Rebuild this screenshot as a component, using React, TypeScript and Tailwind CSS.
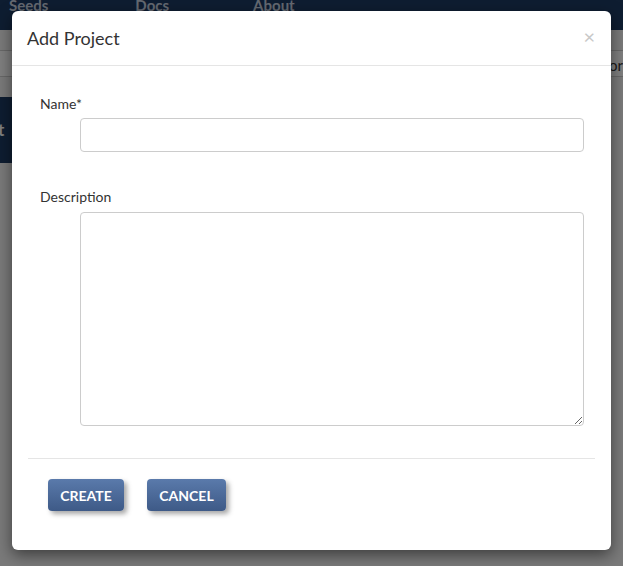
import React from "react";

const font = { fontFamily: "Lato, 'Open Sans', sans-serif" };

function Background() {
  return (
    <div className="relative h-[566px] w-[623px] overflow-hidden bg-[#f4f4f4]">
      {/* Navbar */}
      <div className="flex h-[30px] items-start bg-[#1d3a63] text-[15px] font-bold text-[#c8d2e0]">
        <span className="ml-[9px] -mt-[6px]">Seeds</span>
        <span className="ml-[87px] -mt-[6px]">Docs</span>
        <span className="ml-[84px] -mt-[6px]">About</span>
      </div>
      {/* Sub toolbar */}
      <div className="mt-[20px] h-[27px] border-y border-[#d0d0d0] bg-white pr-0 text-right text-[15px] leading-[29px] text-[#333]">
        or
      </div>
      <div className="mt-[20px] flex h-[66px] w-[12px] items-center bg-[#1d3a63] text-[17px] font-bold text-white">
        <span className="-ml-[2px]">t</span>
      </div>
    </div>
  );
}

export default function App() {
  return (
    <div style={font} className="relative h-[566px] w-[623px] overflow-hidden">
      <Background />
      {/* Backdrop */}
      <div className="absolute inset-0 bg-black/50" />
      {/* Modal */}
      <div className="absolute left-[12px] top-[11px] flex h-[539px] w-[599px] flex-col rounded-[6px] bg-white shadow-[0_5px_15px_rgba(0,0,0,0.5)]">
        <div className="flex h-[55px] items-center justify-between border-b border-[#e5e5e5] pl-[15px] pr-[16px]">
          <h4 className="pt-[1px] text-[18px] text-[#333]">Add Project</h4>
          <span className="-mt-[5px] text-[20px] leading-none text-[#c8c8c8]">×</span>
        </div>
        <div className="flex flex-col px-[28px] pt-[28px]">
          <label className="text-[14px] leading-[20px] text-[#333]">Name*</label>
          <input
            className="ml-[40px] mt-[4px] h-[34px] w-[504px] rounded-[4px] border border-[#cccccc] px-3 text-[14px] outline-none"
            type="text"
          />
          <label className="mt-[35px] text-[14px] leading-[20px] text-[#333]">Description</label>
          <textarea className="ml-[40px] mt-[5px] h-[214px] w-[504px] rounded-[4px] border border-[#cccccc] px-3 py-2 text-[14px] outline-none" />
        </div>
        <div className="mx-[16px] mt-[32px] border-t border-[#e5e5e5]" />
        <div className="flex gap-[23px] pl-[36px] pt-[20px]">
          <button className="h-[32px] w-[76px] rounded-[4px] bg-gradient-to-b from-[#5a7aab] to-[#3e5a87] text-[14px] font-bold text-white shadow-[3px_3px_5px_rgba(0,0,0,0.35)]">
            CREATE
          </button>
          <button className="h-[32px] w-[79px] rounded-[4px] bg-gradient-to-b from-[#5a7aab] to-[#3e5a87] text-[14px] font-bold text-white shadow-[3px_3px_5px_rgba(0,0,0,0.35)]">
            CANCEL
          </button>
        </div>
      </div>
    </div>
  );
}
